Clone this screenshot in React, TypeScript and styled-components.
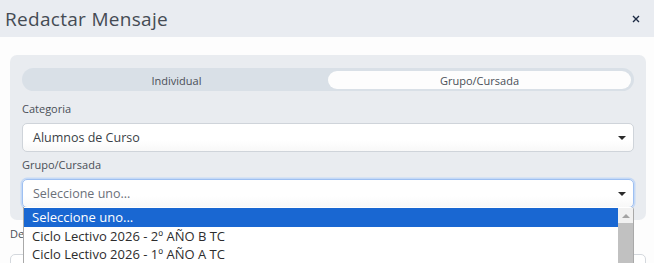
import React from "react";
import styled, { createGlobalStyle } from "styled-components";

const GlobalStyle = createGlobalStyle`
	html, body {
		margin: 0;
		padding: 0;
		background: #fdfdfd;
		overflow: hidden;
	}
	body {
		font-family: "Open Sans", "Noto Sans", sans-serif;
	}
`;

const Modal = styled.div`
	position: relative;
	width: 654px;
	height: 263px;
	background: #fdfdfd;
	overflow: hidden;
`;

const Header = styled.div`
	height: 37px;
	background: #e9ecf1;
	display: flex;
	align-items: center;
	justify-content: space-between;
	padding: 0 12px 0 5px;
	box-sizing: border-box;
`;

const Title = styled.h5`
	margin: 0;
	font-size: 19px;
	font-weight: 400;
	color: #454b54;
	letter-spacing: 0.3px;
`;

const Close = styled.button`
	border: 0;
	background: none;
	padding: 0;
	width: 10px;
	height: 10px;
	display: flex;
	margin-top: 3px;
`;

const Body = styled.div`
	padding: 18px 8px 0 10px;
`;

const Panel = styled.div`
	background: #e9ecf0;
	border-radius: 7px;
	padding: 13px 12px 12px;
`;

const Tabs = styled.div`
	display: grid;
	grid-template-columns: 1fr 1fr;
	height: 23px;
	box-sizing: border-box;
	padding: 3px 3px 2px;
	background: #d9e0e7;
	border-radius: 12px;
`;

const Tab = styled.div<{ $active?: boolean }>`
	display: flex;
	align-items: center;
	justify-content: center;
	border-radius: 10px;
	font-size: 11px;
	color: #4a4f57;
	background: ${(p) => (p.$active ? "#fdfdfd" : "transparent")};
`;

const Label = styled.div<{ $top: number }>`
	margin-top: ${(p) => p.$top}px;
	margin-bottom: 6px;
	font-size: 11px;
	line-height: 16px;
	color: #4a4f57;
`;

const Select = styled.div<{ $focus?: boolean }>`
	height: 29px;
	box-sizing: border-box;
	display: flex;
	align-items: center;
	justify-content: space-between;
	padding: 0 7px 0 10px;
	border-radius: 5px;
	background: linear-gradient(#ffffff 60%, #f8f8f8);
	border: 1px solid ${(p) => (p.$focus ? "#9ec0f2" : "#cfd4da")};
	box-shadow: ${(p) => (p.$focus ? "0 0 0 1.5px #c5d9f6" : "none")};
	font-size: 12.5px;
	color: ${(p) => (p.$focus ? "#6b7079" : "#3a3f46")};
`;

const Caret = styled.span`
	width: 0;
	height: 0;
	border-left: 4px solid transparent;
	border-right: 4px solid transparent;
	border-top: 4px solid #2b2b2b;
`;

const Below = styled.div`
	padding: 6px 0 0;
`;

const SmallLabel = styled.div`
	font-size: 11px;
	line-height: 16px;
	color: #4a4f57;
`;

const Box = styled.div`
	margin-top: 12px;
	height: 40px;
	border: 1px solid #d4d8dd;
	border-radius: 5px;
	background: #ffffff;
`;

const Dropdown = styled.div`
	position: absolute;
	top: 207px;
	left: 23px;
	width: 611px;
	height: 70px;
	box-sizing: border-box;
	padding-top: 1px;
	background: #ffffff;
	border: 1px solid #a9a9a9;
	border-top: 0;
	border-top-right-radius: 3px;
	display: flex;
`;

const Options = styled.div`
	flex: 1;
`;

const Option = styled.div<{ $selected?: boolean }>`
	height: 18.5px;
	line-height: 18.5px;
	padding-left: 8px;
	font-size: 13px;
	color: ${(p) => (p.$selected ? "#ffffff" : "#2d2d2d")};
	background: ${(p) => (p.$selected ? "#1967d2" : "transparent")};
`;

const Scrollbar = styled.div`
	width: 15px;
	background: #f1f1f1;
	display: flex;
	flex-direction: column;
	align-items: center;
`;

const ArrowUp = styled.span`
	margin-top: 6px;
	width: 0;
	height: 0;
	border-left: 4px solid transparent;
	border-right: 4px solid transparent;
	border-bottom: 4px solid #a3a3a3;
`;

const Thumb = styled.div`
	margin-top: 5px;
	width: 15px;
	flex: 1;
	background: #c1c1c1;
`;

const options = [
	"Seleccione uno...",
	"Ciclo Lectivo 2026 - 2º AÑO B TC",
	"Ciclo Lectivo 2026 - 1º AÑO A TC",
];

export default function App() {
	return (
		<>
			<GlobalStyle />
			<Modal>
				<Header>
					<Title>Redactar Mensaje</Title>
					<Close aria-label="Cerrar">
						<svg width="8" height="8" viewBox="0 0 8 8">
							<path d="M1 1 L7 7 M7 1 L1 7" stroke="#1d2a44" strokeWidth="1.4" />
						</svg>
					</Close>
				</Header>
				<Body>
					<Panel>
						<Tabs>
							<Tab>Individual</Tab>
							<Tab $active>Grupo/Cursada</Tab>
						</Tabs>
						<Label $top={10}>Categoria</Label>
						<Select>
							Alumnos de Curso
							<Caret />
						</Select>
						<Label $top={5}>Grupo/Cursada</Label>
						<Select $focus>
							Seleccione uno...
							<Caret />
						</Select>
					</Panel>
					<Below>
						<SmallLabel>Destinatarios</SmallLabel>
						<Box />
					</Below>
				</Body>
				<Dropdown>
					<Options>
						{options.map((o, i) => (
							<Option key={o} $selected={i === 0}>
								{o}
							</Option>
						))}
					</Options>
					<Scrollbar>
						<ArrowUp />
						<Thumb />
					</Scrollbar>
				</Dropdown>
			</Modal>
		</>
	);
}
